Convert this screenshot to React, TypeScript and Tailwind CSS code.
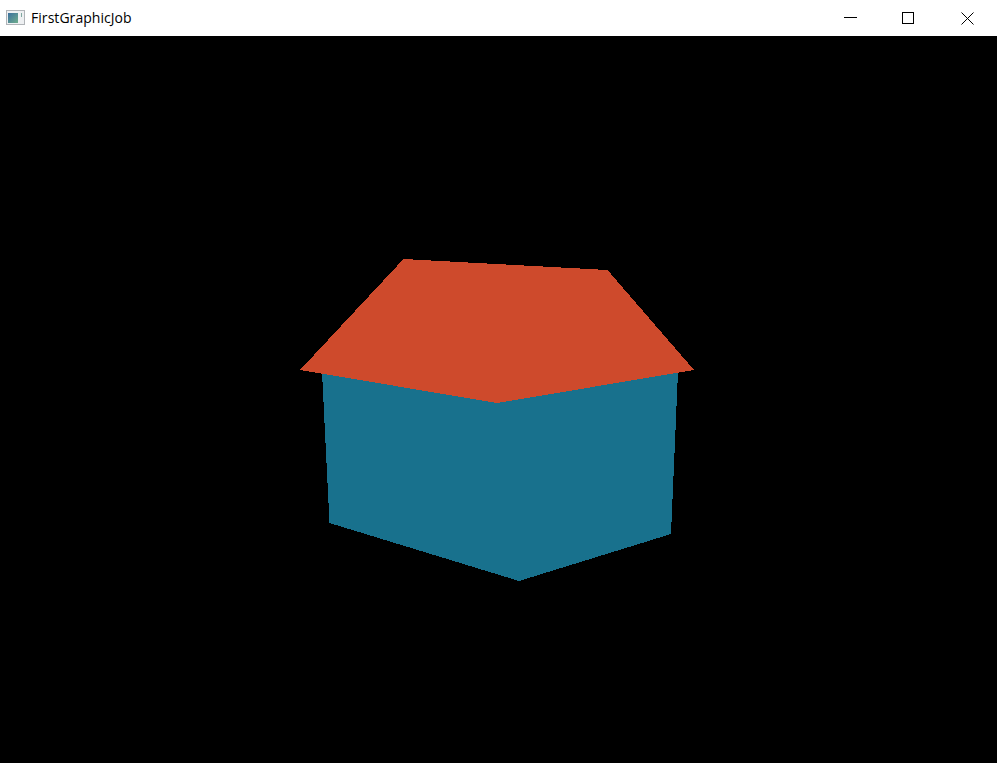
export default function App() {
  return (
    <div className="flex h-[763px] w-[997px] flex-col overflow-hidden bg-black">
      <header className="flex h-9 shrink-0 items-center justify-between bg-white">
        <div className="flex items-center gap-[6px] pl-[6px]">
          <svg width="19" height="16" viewBox="0 0 19 16" className="shrink-0">
            <defs>
              <linearGradient id="appIcon" x1="0" y1="0" x2="1" y2="1">
                <stop offset="0" stopColor="#3b6f9e" />
                <stop offset="1" stopColor="#6fae8c" />
              </linearGradient>
            </defs>
            <rect x="0.5" y="0.5" width="18" height="14" fill="#eef0f2" stroke="#b0b4b8" />
            <rect x="2" y="3" width="10" height="10" fill="url(#appIcon)" />
            <rect x="15" y="3" width="1" height="4" fill="#7fa8a0" />
          </svg>
          <span className="font-['Open_Sans','Noto_Sans',sans-serif] text-[14px] leading-none tracking-[0.05px] text-black">
            FirstGraphicJob
          </span>
        </div>
        <div className="flex h-full pr-[1px]">
          <button className="flex w-[55px] items-center justify-center">
            <svg width="13" height="12" viewBox="0 0 13 12" shapeRendering="crispEdges">
              <path d="M0 5.5H13" stroke="#000" fill="none" />
            </svg>
          </button>
          <button className="flex w-[60px] items-center justify-center">
            <svg width="12" height="12" viewBox="0 0 12 12" shapeRendering="crispEdges">
              <rect x="0.5" y="0.5" width="11" height="11" stroke="#000" fill="none" />
            </svg>
          </button>
          <button className="flex w-[58px] items-center justify-center">
            <svg width="13" height="13" viewBox="0 0 13 13">
              <path d="M0.5 0.5L12.5 12.5M12.5 0.5L0.5 12.5" stroke="#000" fill="none" />
            </svg>
          </button>
        </div>
      </header>
      <main className="flex-1">
        {/* house drawn in page coords, canvas starts at y=36 */}
        <svg width="997" height="727" viewBox="0 36 997 727" className="block" shapeRendering="crispEdges">
          <polygon points="322,372 678,372 671,534 519,581 329.5,523" fill="#18718d" />
          <polygon points="403.5,259 607.5,270 694,370 497,403 300,370" fill="#ce4a2c" />
        </svg>
      </main>
    </div>
  )
}
